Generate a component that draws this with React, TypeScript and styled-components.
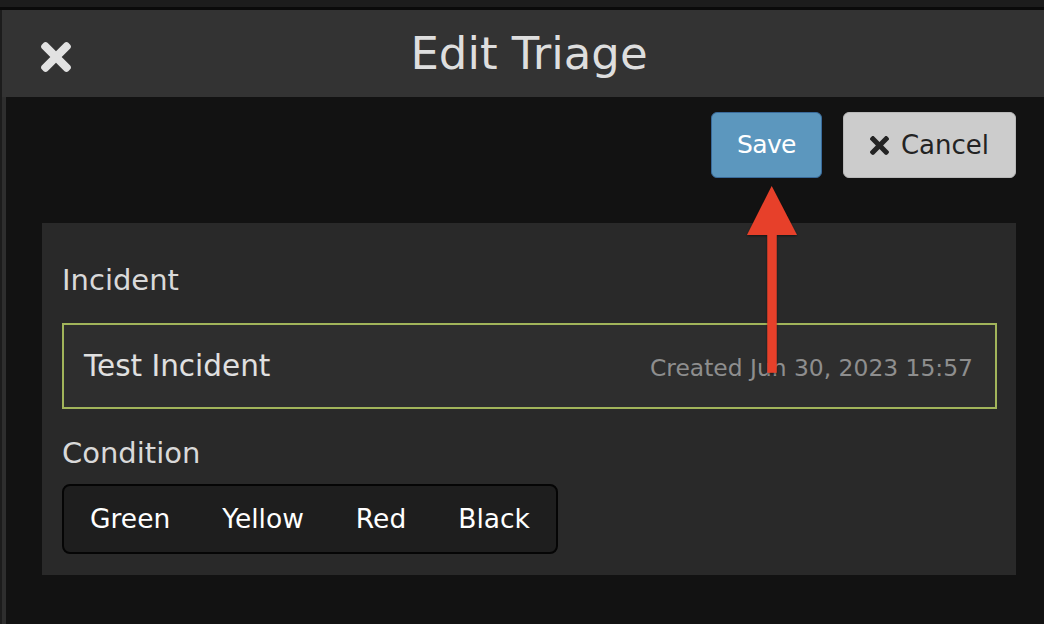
import React from "react";
import styled, { createGlobalStyle } from "styled-components";

const GlobalStyle = createGlobalStyle`
  html, body {
    margin: 0;
    padding: 0;
    background: #121212;
    overflow: hidden;
  }
  * { box-sizing: border-box; }
  body {
    font-family: "DejaVu Sans", "Liberation Sans", sans-serif;
  }
`;

const Root = styled.div`
  position: relative;
  width: 1044px;
  height: 624px;
  display: flex;
  flex-direction: column;
  background: #121212;
`;

const TopStrip = styled.div`
  height: 10px;
  flex: none;
  background: #1c1c1c;
  border-bottom: 3px solid #0a0a0a;
`;

const Frame = styled.div`
  flex: 1;
  display: flex;
`;

const LeftEdge = styled.div`
  width: 2px;
  flex: none;
  background: #1c1c1c;
`;

const Window = styled.div`
  flex: 1;
  display: flex;
  flex-direction: column;
`;

const Header = styled.header`
  height: 87px;
  flex: none;
  background: #333333;
  display: grid;
  grid-template-columns: 100px 1fr 88px;
  align-items: center;
`;

const CloseButton = styled.button`
  justify-self: start;
  margin: 7px 0 0 39px;
  padding: 0;
  border: 0;
  background: none;
  color: #e2e2e2;
  display: flex;
  cursor: pointer;
`;

const Title = styled.h1`
  margin: 0;
  text-align: center;
  font-size: 45px;
  line-height: 1;
  font-weight: 400;
  color: #dedede;
`;

const Body = styled.main`
  flex: 1;
  background: #121212;
  border-left: 4px solid #2e2e2e;
  padding: 15px 28px 0 36px;
  display: flex;
  flex-direction: column;
`;

const Actions = styled.div`
  display: flex;
  justify-content: flex-end;
  gap: 21px;
`;

const Button = styled.button<{ $variant: "primary" | "default" }>`
  height: 66px;
  display: flex;
  align-items: center;
  gap: 12px;
  border-radius: 6px;
  font-family: "DejaVu Sans", sans-serif;
  line-height: 30px;
  cursor: pointer;
  ${(p) =>
    p.$variant === "primary"
      ? `
    padding: 0 25px;
    background: #5c97be;
    border: 1px solid #3a6b9b;
    color: #ffffff;
    font-size: 25px;
    letter-spacing: -0.6px;
  `
      : `
    padding: 0 26px 0 26px;
    background: #cccccc;
    border: 1px solid #b8b8b8;
    color: #232323;
    font-size: 26px;
  `}
`;

const Panel = styled.section`
  margin-top: 45px;
  background: #292929;
  padding: 40px 19px 21px 20px;
  display: flex;
  flex-direction: column;
  align-items: flex-start;
`;

const Label = styled.div<{ $gap?: number }>`
  margin-top: ${(p) => p.$gap ?? 0}px;
  font-size: 29px;
  line-height: 34px;
  color: #d9d9d9;
`;

const IncidentBox = styled.div`
  margin-top: 26px;
  align-self: stretch;
  height: 86px;
  border: 2px solid #a1b45a;
  background: #2e2e2e;
  display: flex;
  align-items: baseline;
  padding: 24px 22px 0 20px;
`;

const IncidentName = styled.span`
  font-size: 29.5px;
  line-height: 34px;
  color: #e0e0e0;
`;

const Created = styled.span`
  margin-left: auto;
  font-size: 23.4px;
  line-height: 34px;
  color: #8e8e8e;
`;

const Segmented = styled.div`
  margin-top: 14px;
  height: 70px;
  display: flex;
  align-items: center;
  background: #1e1e1e;
  border: 2px solid #050505;
  border-radius: 8px;
`;

const Segment = styled.button`
  padding: 0 26px;
  border: 0;
  background: none;
  font-family: "DejaVu Sans", sans-serif;
  font-size: 26.5px;
  line-height: 30px;
  color: #ffffff;
  cursor: pointer;
`;

const ArrowLayer = styled.svg`
  position: absolute;
  left: 740px;
  top: 180px;
  pointer-events: none;
  overflow: visible;
`;

const TimesIcon = ({ size }: { size: number }) => (
  <svg width={size} height={size} viewBox="0 80 352 352" fill="currentColor" aria-hidden="true">
    <path d="M242.72 256l100.07-100.07c12.28-12.28 12.28-32.19 0-44.48l-22.24-22.24c-12.28-12.28-32.19-12.28-44.48 0L176 189.28 75.930 89.21c-12.28-12.28-32.19-12.28-44.48 0L9.21 111.45c-12.28 12.28-12.28 32.19 0 44.48L109.28 256 9.21 356.07c-12.28 12.28-12.28 32.19 0 44.48l22.24 22.24c12.28 12.28 32.2 12.28 44.48 0L176 322.72l100.07 100.07c12.28 12.28 32.2 12.28 44.48 0l22.24-22.24c12.28-12.28 12.28-32.19 0-44.48L242.72 256z" />
  </svg>
);

const conditions = ["Green", "Yellow", "Red", "Black"];

export default function App() {
  return (
    <>
      <GlobalStyle />
      <Root>
        <TopStrip />
        <Frame>
          <LeftEdge />
          <Window>
            <Header>
              <CloseButton aria-label="Close">
                <TimesIcon size={30} />
              </CloseButton>
              <Title>Edit Triage</Title>
              <span />
            </Header>
            <Body>
              <Actions>
                <Button $variant="primary">Save</Button>
                <Button $variant="default">
                  <TimesIcon size={19} />
                  Cancel
                </Button>
              </Actions>
              <Panel>
                <Label>Incident</Label>
                <IncidentBox>
                  <IncidentName>Test Incident</IncidentName>
                  <Created>Created Jun 30, 2023 15:57</Created>
                </IncidentBox>
                <Label $gap={27}>Condition</Label>
                <Segmented>
                  {conditions.map((c) => (
                    <Segment key={c}>{c}</Segment>
                  ))}
                </Segmented>
              </Panel>
            </Body>
          </Window>
        </Frame>
        <ArrowLayer width="64" height="200" viewBox="0 0 64 200">
          <defs>
            <filter id="arrowShadow" x="-30%" y="-10%" width="160%" height="120%">
              <feDropShadow dx="0" dy="1" stdDeviation="1.2" floodColor="#000" floodOpacity="0.5" />
            </filter>
          </defs>
          <path
            d="M31.7 6 L57 55 L36.7 55 L36.7 192.7 L27.3 192.7 L27.3 55 L7 55 Z"
            fill="#e7412a"
            filter="url(#arrowShadow)"
          />
        </ArrowLayer>
      </Root>
    </>
  );
}
